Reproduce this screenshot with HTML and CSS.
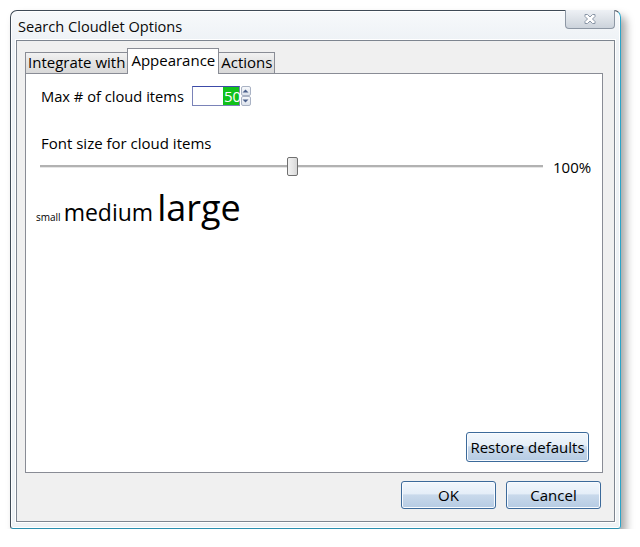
FILE: index.html
```html
<!DOCTYPE html>
<html>
<head>
<meta charset="utf-8">
<link rel="stylesheet" href="styles.css">
</head>
<body>
<div class="window">
  <div class="titlebar">
    <span class="title">Search Cloudlet Options</span>
    <div class="close">
      <svg width="16" height="12" viewBox="0 0 16 12"><path d="M3 1.5 L5.5 1.5 L8 4 L10.5 1.5 L13 1.5 L13 3.5 L10.5 6 L13 8.5 L13 10.5 L10.5 10.5 L8 8 L5.5 10.5 L3 10.5 L3 8.5 L5.5 6 L3 3.5 Z" fill="#fff" stroke="#8a96a6" stroke-width="1"/></svg>
    </div>
  </div>
  <div class="client">
    <div class="tabs">
      <div class="tab">Integrate with</div>
      <div class="tab active">Appearance</div>
      <div class="tab">Actions</div>
    </div>
    <div class="panel">
      <div class="row">
        <span class="label">Max # of cloud items</span>
        <div class="spin">
          <div class="spin-input"><span class="sel">50</span></div>
          <div class="spin-btns">
            <div class="sb"><svg width="7" height="4" viewBox="0 0 7 4"><path d="M0.5 3.5 L3.5 0.5 L6.5 3.5 Z" fill="#4a5f8a"/></svg></div>
            <div class="sb"><svg width="7" height="4" viewBox="0 0 7 4"><path d="M0.5 0.5 L3.5 3.5 L6.5 0.5 Z" fill="#4a5f8a"/></svg></div>
          </div>
        </div>
      </div>
      <div class="label font-label">Font size for cloud items</div>
      <div class="slider-row">
        <div class="slider">
          <div class="track"></div>
          <div class="thumb"></div>
        </div>
        <span class="pct">100%</span>
      </div>
      <div class="cloud">
        <span class="c-small">small</span>
        <span class="c-medium">medium</span>
        <span class="c-large">large</span>
      </div>
      <div class="spacer"></div>
      <div class="restore-row">
        <button class="btn restore">Restore defaults</button>
      </div>
    </div>
    <div class="footer">
      <button class="btn ok">OK</button>
      <button class="btn cancel">Cancel</button>
    </div>
  </div>
</div>
</body>
</html>
```
FILE: styles.css
```css
html, body {
  margin: 0;
  padding: 0;
  background: #ffffff;
}
* {
  box-sizing: border-box;
}
body {
  font-family: "Open Sans", "Noto Sans", sans-serif;
  color: #000;
  padding: 10px 0 0 10px;
}
.window {
  width: 611px;
  height: 519px;
  border: 1px solid #3f4a56;
  border-right-color: #2aa4c8;
  border-bottom-color: #2a8fb0;
  border-radius: 7px 7px 3px 3px;
  background: linear-gradient(#f7f9fb, #eef2f6 30px, #eef2f5);
  box-shadow: 5px 6px 9px rgba(0,0,0,0.35), inset 0 0 0 1px #ffffff;
  display: flex;
  flex-direction: column;
}
.titlebar {
  height: 29px;
  flex: none;
  display: flex;
  align-items: flex-start;
  justify-content: space-between;
  padding: 0 5px 0 7px;
}
.title {
  font-size: 14.6px;
  line-height: 15px;
  margin-top: 8px;
  color: #0a0a0a;
}
.close {
  width: 50px;
  height: 19px;
  margin-top: -1px;
  border: 1px solid #8d97a4;
  border-top: none;
  border-radius: 0 0 4px 4px;
  background: linear-gradient(#eef1f5, #dde2e8 50%, #ccd3db);
  display: flex;
  align-items: center;
  justify-content: center;
}
.client {
  flex: 1;
  margin: 0 5px 6px 5px;
  border: 1px solid #7d8590;
  box-shadow: 0 0 0 1px #ffffff;
  background: #f0f0f0;
  display: flex;
  flex-direction: column;
  padding: 7px 11px 0 8px;
}
.tabs {
  display: flex;
  align-items: flex-end;
  height: 26px;
  flex: none;
  margin-bottom: -1px;
  position: relative;
  z-index: 1;
}
.tab {
  font-size: 15px;
  height: 21px;
  line-height: 19px;
  padding: 0 2px;
  border: 1px solid #898c95;
  border-bottom: none;
  background: linear-gradient(#f2f2f2, #e3e3e3 50%, #d9d9d9);
  margin-right: -1px;
  margin-bottom: 1px;
}
.tab.active {
  height: 26px;
  line-height: 22px;
  background: #ffffff;
  padding: 0 3px;
  margin-bottom: 0;
  position: relative;
  z-index: 2;
}
.panel {
  height: 400px;
  flex: none;
  border: 1px solid #898c95;
  background: #ffffff;
  display: flex;
  flex-direction: column;
  padding: 0 12px 10px 10px;
}
.label {
  font-size: 15px;
}
.row {
  display: flex;
  align-items: center;
  margin-top: 12px;
  margin-left: 5px;
  height: 20px;
}
.row .label {
  font-size: 14.7px;
}
.spin {
  display: flex;
  margin-left: 8px;
}
.spin-input {
  width: 48px;
  height: 20px;
  border: 1px solid #7a83b8;
  border-top-color: #3c4aa8;
  display: flex;
  justify-content: flex-end;
}
.sel {
  background: #11c11a;
  color: #ffffff;
  font-size: 15px;
  line-height: 18px;
  padding: 0 0 0 1px;
  width: 16px;
}
.spin-btns {
  display: flex;
  flex-direction: column;
  margin-left: 1px;
}
.sb {
  width: 10px;
  height: 10px;
  border: 1px solid #a9b2c4;
  background: linear-gradient(#f6f8fb, #dde3ec);
  display: flex;
  align-items: center;
  justify-content: center;
  margin-bottom: 0;
  border-radius: 2px;
}
.font-label {
  margin-top: 27px;
  margin-left: 5px;
  line-height: 20px;
}
.slider-row {
  display: flex;
  align-items: center;
  margin-top: 2px;
  margin-left: 4px;
}
.slider {
  flex: none;
  width: 503px;
  height: 19px;
  position: relative;
}
.track {
  position: absolute;
  left: 0;
  right: 0;
  top: 8px;
  height: 3px;
  background: #b2b2b2;
  border-bottom: 1px solid #e6e6e6;
}
.thumb {
  position: absolute;
  left: 247px;
  top: 0;
  width: 11px;
  height: 19px;
  border: 1px solid #707070;
  border-radius: 2px;
  background: linear-gradient(90deg, #f2f2f2, #e4e4e4 60%, #d6d6d6);
}
.pct {
  font-size: 15px;
  margin-left: 10px;
  margin-top: 2px;
  white-space: nowrap;
}
.cloud {
  margin-top: 13px;
  display: flex;
  align-items: baseline;
  gap: 3px;
  margin-left: 0;
  line-height: 1;
}
.c-small { font-size: 10px; }
.c-medium { font-size: 23px; margin-left: 0; }
.c-large { font-size: 36px; margin-left: 1px; }
.spacer { flex: 1; }
.restore-row {
  display: flex;
  justify-content: flex-end;
  margin-right: 1px;
}
.btn {
  font-family: "Open Sans", "Noto Sans", sans-serif;
  font-size: 15px;
  color: #000;
  border: 1px solid #3c6a9a;
  border-radius: 3px;
  background: linear-gradient(#f2f7fc, #e5eef8 45%, #c9d9eb 50%, #b5cbe3);
  box-shadow: inset 0 0 0 1px #f8fbff;
  padding: 0;
}
.restore {
  width: 123px;
  height: 30px;
}
.footer {
  display: flex;
  justify-content: flex-end;
  gap: 10px;
  margin-top: 8px;
  margin-right: 2px;
}
.ok, .cancel {
  width: 95px;
  height: 28px;
}
```
